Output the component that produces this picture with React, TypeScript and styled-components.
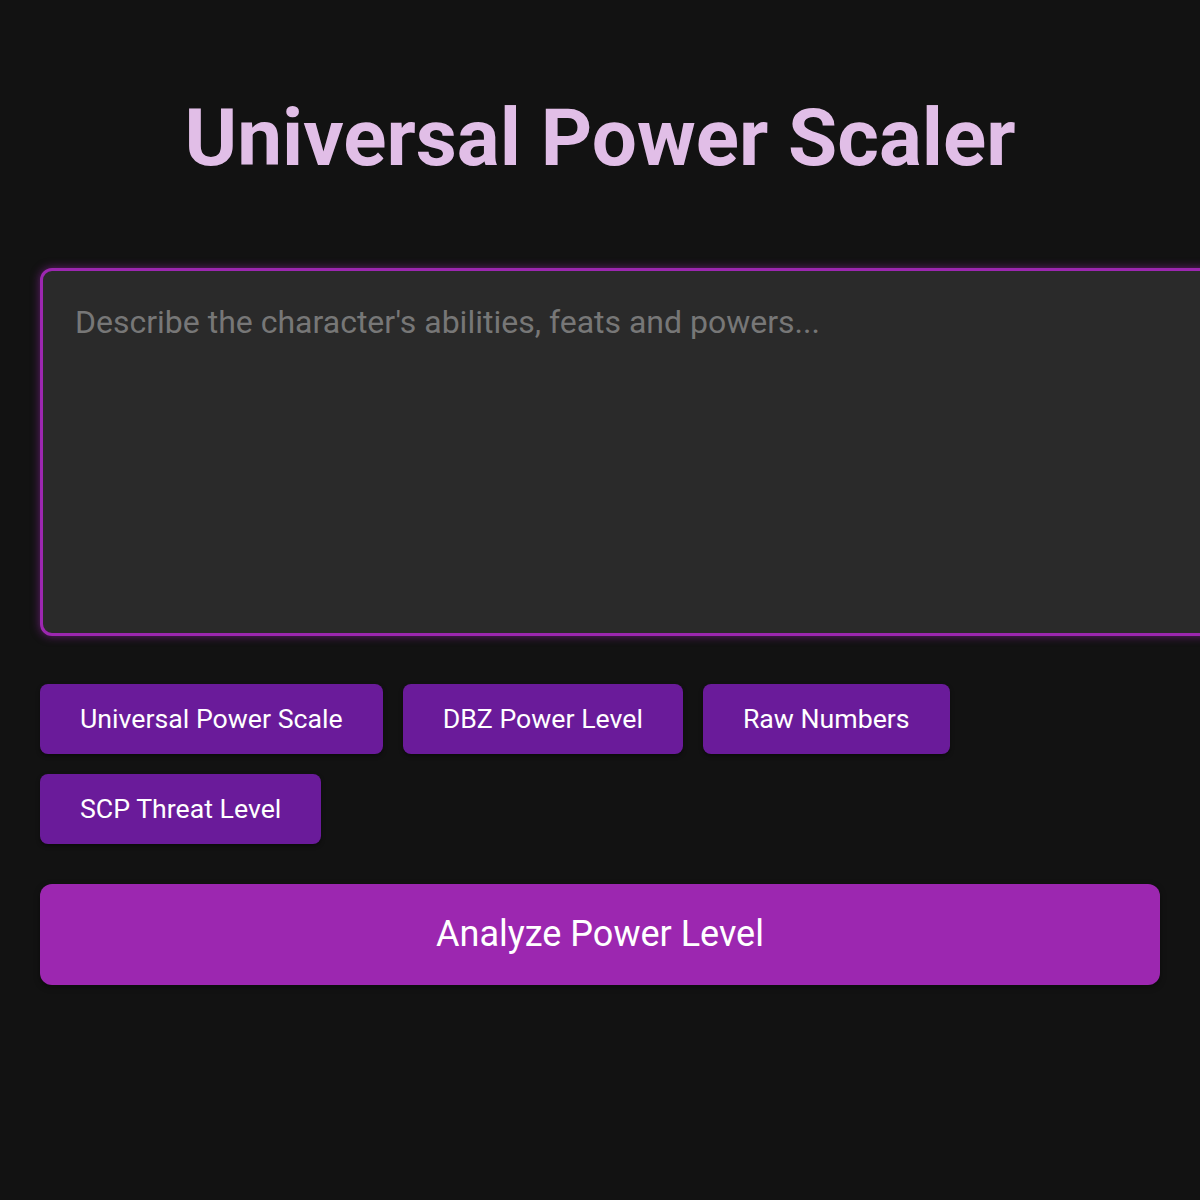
import React, { useState } from 'react';
import styled, { createGlobalStyle } from 'styled-components';

const GlobalStyle = createGlobalStyle`
  html, body {
    margin: 0;
    background: #121212;
    color: #fff;
    font-family: Roboto, "Liberation Sans", sans-serif;
  }
`;

const Page = styled.div`
  padding: 40px;
`;

const Title = styled.h1`
  margin: 50px 0 82px;
  text-align: center;
  color: #e1bee7;
  font-size: 80px;
  font-weight: 700;
  line-height: 1.2;
`;

const Input = styled.textarea`
  display: block;
  width: 100%;
  height: 298px;
  padding: 32px;
  margin: 0;
  background: #2a2a2a;
  color: #fff;
  border: 3px solid #9c27b0;
  border-radius: 12px;
  box-shadow: 0 0 10px rgba(156, 39, 176, 0.6);
  font-family: Roboto, "Liberation Sans", sans-serif;
  font-size: 32px;
  resize: none;
  outline: none;

  &::placeholder {
    color: #777;
  }
`;

const Options = styled.div`
  display: flex;
  flex-wrap: wrap;
  gap: 20px;
  margin-top: 48px;
  max-width: 920px;
`;

const OptionButton = styled.button<{ $active?: boolean }>`
  padding: 20px 40px;
  background: ${(p) => (p.$active ? '#9c27b0' : '#6a1b9a')};
  color: #fff;
  border: none;
  border-radius: 8px;
  box-shadow: 0 2px 4px rgba(0, 0, 0, 0.4);
  font-family: Roboto, "Liberation Sans", sans-serif;
  font-size: 26.7px;
  line-height: 30px;
  cursor: pointer;
`;

const AnalyzeButton = styled.button`
  display: block;
  width: 100%;
  margin-top: 40px;
  padding: 30px;
  background: #9c27b0;
  color: #fff;
  border: none;
  border-radius: 12px;
  box-shadow: 0 2px 6px rgba(0, 0, 0, 0.4);
  font-family: Roboto, "Liberation Sans", sans-serif;
  font-size: 36px;
  line-height: 41px;
  cursor: pointer;
`;

const scales = [
  'Universal Power Scale',
  'DBZ Power Level',
  'Raw Numbers',
  'SCP Threat Level',
];

export default function App() {
  const [text, setText] = useState('');

  return (
    <Page>
      <GlobalStyle />
      <Title>Universal Power Scaler</Title>
      <Input
        value={text}
        onChange={(e) => setText(e.target.value)}
        placeholder="Describe the character's abilities, feats and powers..."
      />
      <Options>
        {scales.map((s) => (
          <OptionButton key={s}>{s}</OptionButton>
        ))}
      </Options>
      <AnalyzeButton>Analyze Power Level</AnalyzeButton>
    </Page>
  );
}
